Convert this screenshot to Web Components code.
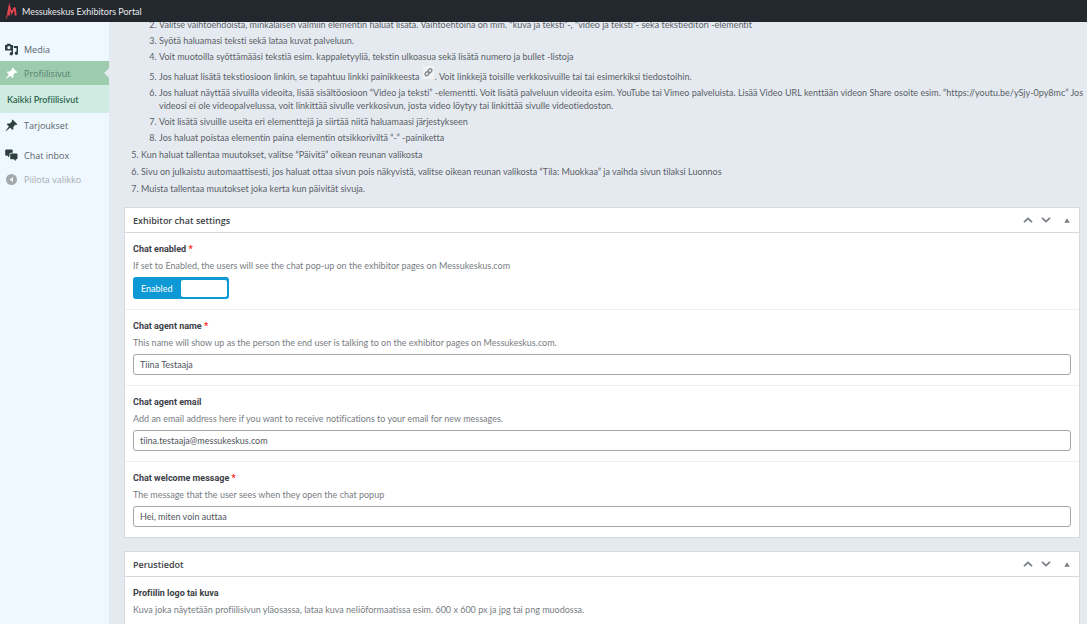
<!DOCTYPE html>
<html lang="fi">
<head>
<meta charset="utf-8">
<title>Messukeskus Exhibitors Portal</title>
<meta name="viewport" content="width=device-width, initial-scale=1">
<style>
  body { margin: 0; background: #e5eaf1; color: #5a5f65; font: 9px/13px Lato, "Noto Sans", sans-serif; font-variant-ligatures: none; }
</style>
</head>
<body>
<portal-app></portal-app>

<script>
const define = (name, html, setup) => {
  const template = document.createElement('template');
  template.innerHTML = html;
  customElements.define(name, class extends HTMLElement {
    constructor() {
      super();
      this.attachShadow({ mode: 'open' }).append(template.content.cloneNode(true));
    }
    connectedCallback() { if (setup) setup(this, this.shadowRoot); }
  });
};

define('portal-bar', `
  <style>
    :host { display: flex; align-items: center; height: 22px; padding: 0 6px; background: #23282f; position: relative; z-index: 2; }
    a { display: flex; align-items: center; gap: 5px; color: #e8eaec; text-decoration: none; font-size: 9px; }
    svg { display: block; }
  </style>
  <a href="#"><svg width="11" height="16" viewBox="0 0 11 16" fill="none" stroke="#ef4550" aria-hidden="true"><path d="M.5 15.500 3.600.5" stroke-width=".9"/><path d="M3.200 3 5.700 10 8.600 4.500" stroke-width="1.600"/><path d="M3 5.500V12.500M8.600 4.500 9.800 12.500" stroke-width="1.800"/></svg><span><slot></slot></span></a>`);

const ICONS = {
  media: '<path fill-rule="evenodd" d="M0 2h1.500L2.200.7h3L6 2h2v5.500H0ZM3.900 3a1.600 1.600 0 1 0 0 3.200 1.600 1.600 0 0 0 0-3.200Z"/><path d="M8.800 3H13v7.200a1.700 1.700 0 1 1-1.500-1.700V5H8.800Z"/><path d="M8 7v3.800a1.700 1.700 0 1 1-1.500-1.700V7Z"/>',
  pin: '<path d="M7.600.5 12.300 5.200l-.8.8-1.200-.2-2.100 2.300.2 2-.9.9-2.200-2.200L.6 12.300l-.2-.2L3.900 7.500 1.700 5.300l.9-.9 2.100.2L7 2.500l-.2-1.200Z"/>',
  chat: '<path d="M1.200.5h5.500q1 0 1 1v2.200H6q-1.500 0-1.500 1.500v1.600L3 8.500V6.700H1.200q-1 0-1-1V1.500q0-1 1-1Z"/><path d="M6.200 4.500h5.300q1 0 1 1v3.700q0 1-1 1h-.7V12l-2-1.800H6.200q-1 0-1-1V5.500q0-1 1-1Z"/>',
  hide: '<path fill-rule="evenodd" d="M6.500 1a5.500 5.500 0 1 0 0 11 5.500 5.500 0 0 0 0-11ZM8 4v5L4.500 6.500Z"/>'
};
define('menu-item', `
  <style>
    :host { display: block; }
    a, button { box-sizing: border-box; display: flex; align-items: center; gap: 6px; width: 100%; height: 24px; padding: 0 5px; border: 0; background: none; color: #58636a; font: 9px/13px "Open Sans", "Noto Sans", sans-serif; text-decoration: none; text-align: left; position: relative; }
    svg { display: block; width: 13px; height: 13px; flex: none; fill: #2f4041; }
    :host([current]) a { background: #9ccbae; color: #567f69; }
    :host([current]) svg { fill: #fff; }
    :host([current]) a::after { content: ""; position: absolute; right: 0; top: 7px; border: 5px solid transparent; border-left: 0; border-right-color: #e5eaf1; }
    button { color: #a4abb0; }
    button svg { fill: #a3a8aa; }
  </style>`, (host, root) => {
    const control = document.createElement(host.hasAttribute('action') ? 'button' : 'a');
    if (control.localName === 'a') control.href = '#';
    control.innerHTML = `<svg viewBox="0 0 13 13" aria-hidden="true">${ICONS[host.getAttribute('icon')]}</svg><span><slot></slot></span>`;
    root.append(control);
  });

define('side-menu', `
  <style>
    :host { display: block; background: #f0f8ff; }
    nav { padding-top: 15px; }
    .sub { display: flex; align-items: center; height: 28px; padding: 0 7px; background: #d0ece2; color: #2f6650; font-size: 9px; font-weight: 600; text-decoration: none; }
    .group { padding-top: 6px; }
  </style>
  <nav aria-label="Valikko">
    <menu-item icon="media">Media</menu-item>
    <menu-item icon="pin" current>Profiilisivut</menu-item>
    <a class="sub" href="#">Kaikki Profiilisivut</a>
    <menu-item icon="pin">Tarjoukset</menu-item>
    <div class="group">
      <menu-item icon="chat">Chat inbox</menu-item>
      <menu-item icon="hide" action>Piilota valikko</menu-item>
    </div>
  </nav>`);

define('help-steps', `
  <style>
    :host { display: block; }
    ol { margin: 0; padding-left: 9px; }
    ol ol { padding-left: 18px; }
    li { margin-bottom: 4px; }
    li li { margin-bottom: 3px; }
    .nest { list-style: none; }
    .icon { display: inline-block; background: #f1f2f3; margin: 0 1px 4px; padding: 1px 0; vertical-align: bottom; }
    .icon svg { display: block; }
  </style>
  <ol start="4">
    <li class="nest"><ol start="2">
      <li>Valitse vaihtoehdoista, minkälaisen valmiin elementin haluat lisätä. Vaihtoehtoina on mm. “kuva ja teksti”-, “video ja teksti”- sekä tekstieditori -elementit</li>
      <li>Syötä haluamasi teksti sekä lataa kuvat palveluun.</li>
      <li>Voit muotoilla syöttämääsi tekstiä esim. kappaletyyliä, tekstin ulkoasua sekä lisätä numero ja bullet -listoja</li>
      <li>Jos haluat lisätä tekstiosioon linkin, se tapahtuu linkki painikkeesta <span class="icon"><svg width="11" height="11" viewBox="0 0 12 12" fill="none" stroke="#85898d" stroke-width="1.500" aria-hidden="true"><rect x="5" y="2.500" width="5" height="3.400" rx="1.700" transform="rotate(-45 7.500 4.200)"/><rect x="2" y="5.500" width="5" height="3.400" rx="1.700" transform="rotate(-45 4.500 7.200)"/></svg></span>. Voit linkkejä toisille verkkosivuille tai tai esimerkiksi tiedostoihin.</li>
      <li>Jos haluat näyttää sivuilla videoita, lisää sisältöosioon “Video ja teksti” -elementti. Voit lisätä palveluun videoita esim. YouTube tai Vimeo palveluista. Lisää Video URL kenttään videon Share osoite esim. “https://youtu.be/ySjy-0py8mc” Jos videosi ei ole videopalvelussa, voit linkittää sivulle verkkosivun, josta video löytyy tai linkittää sivulle videotiedoston.</li>
      <li>Voit lisätä sivuille useita eri elementtejä ja siirtää niitä haluamaasi järjestykseen</li>
      <li>Jos haluat poistaa elementin paina elementin otsikkoriviltä “-” -painiketta</li>
    </ol></li>
    <li>Kun haluat tallentaa muutokset, valitse “Päivitä” oikean reunan valikosta</li>
    <li>Sivu on julkaistu automaattisesti, jos haluat ottaa sivun pois näkyvistä, valitse oikean reunan valikosta “Tila: Muokkaa” ja vaihda sivun tilaksi Luonnos</li>
    <li>Muista tallentaa muutokset joka kerta kun päivität sivuja.</li>
  </ol>`);

define('meta-box', `
  <style>
    :host { display: block; background: #fff; border: 1px solid #d5dade; }
    header { display: flex; align-items: center; height: 24px; padding: 0 4px 0 8px; border-bottom: 1px solid #d5dade; }
    h2 { flex: 1; margin: 0; font: 600 9px/13px "Open Sans", "Noto Sans", sans-serif; color: #3c4147; }
    button { display: flex; align-items: center; justify-content: center; width: 18px; height: 18px; padding: 0; border: 0; background: none; color: #777d83; }
    .toggle { margin-left: 4px; width: 16px; }
  </style>
  <header>
    <h2><slot name="title"></slot></h2>
    <button aria-label="Siirrä ylös"><svg width="10" height="6" viewBox="0 0 10 6" fill="none" stroke="currentColor" stroke-width="1.700"><path d="M1 5.200 5 1.400 9 5.200"/></svg></button>
    <button aria-label="Siirrä alas"><svg width="10" height="6" viewBox="0 0 10 6" fill="none" stroke="currentColor" stroke-width="1.700"><path d="M1 .8 5 4.600 9 .8"/></svg></button>
    <button class="toggle" aria-label="Näytä tai piilota"><svg width="6" height="5" viewBox="0 0 6 5" fill="currentColor"><path d="M3 .2 5.700 4.700H.3Z"/></svg></button>
  </header>
  <slot></slot>`);

define('form-field', `
  <style>
    :host { display: block; padding: 10px 8px; border-bottom: 1px solid #eef0f2; }
    :host(:last-of-type) { border-bottom: 0; }
    .name { display: block; margin-bottom: 3px; font-family: Roboto, "Noto Sans", sans-serif; font-weight: 700; color: #3c4147; }
    .name b { color: #f22; }
    p { margin: 0 0 5px; color: #787d82; }
    input[type=text], input[type=email] { display: block; box-sizing: border-box; width: 100%; height: 21px; padding: 0 6px; border: 1px solid #a0a6ab; border-radius: 3px; background: #fff; color: #50555b; font: inherit; font-variant-ligatures: none; }
    .switch { display: inline-flex; align-items: center; justify-content: space-between; box-sizing: border-box; width: 96px; height: 22px; padding: 0 2px 0 8px; border-radius: 3px; background: #0d99d5; color: #fff; vertical-align: top; }
    .switch input { appearance: none; width: 46px; height: 17px; margin: 0; border-radius: 2px; background: #fff; }
  </style>`, (host, root) => {
    const type = host.getAttribute('type');
    const label = document.createElement(type ? 'label' : 'div');
    label.className = 'name';
    label.textContent = host.getAttribute('label');
    if (type) label.htmlFor = 'control';
    if (host.hasAttribute('required')) {
      const star = document.createElement('b');
      star.textContent = '*';
      label.append(' ', star);
    }
    const hint = document.createElement('p');
    hint.textContent = host.getAttribute('hint');
    root.append(label, hint);
    if (!type) return;
    const input = document.createElement('input');
    input.type = type;
    input.id = 'control';
    if (type === 'checkbox') {
      input.checked = true;
      const toggle = document.createElement('label');
      toggle.className = 'switch';
      toggle.append(Object.assign(document.createElement('span'), { textContent: 'Enabled' }), input);
      root.append(toggle);
    } else {
      input.value = host.getAttribute('value');
      root.append(input);
    }
  });

define('portal-app', `
  <style>
    :host { display: flex; flex-direction: column; height: 100vh; overflow: hidden; }
    .body { flex: 1; min-height: 0; display: grid; grid-template-columns: 109px minmax(0, 1fr); }
    main { padding: 0 7px 0 15px; }
    help-steps { margin: -4px -7px 12px 8px; }
    meta-box { margin-bottom: 13px; }
  </style>
  <portal-bar>Messukeskus Exhibitors Portal</portal-bar>
  <div class="body">
    <side-menu></side-menu>
    <main>
      <help-steps></help-steps>
      <meta-box>
        <span slot="title">Exhibitor chat settings</span>
        <form-field type="checkbox" label="Chat enabled" required hint="If set to Enabled, the users will see the chat pop-up on the exhibitor pages on Messukeskus.com"></form-field>
        <form-field type="text" label="Chat agent name" required hint="This name will show up as the person the end user is talking to on the exhibitor pages on Messukeskus.com." value="Tiina Testaaja"></form-field>
        <form-field type="email" label="Chat agent email" hint="Add an email address here if you want to receive notifications to your email for new messages." value="tiina.testaaja@messukeskus.com"></form-field>
        <form-field type="text" label="Chat welcome message" required hint="The message that the user sees when they open the chat popup" value="Hei, miten voin auttaa"></form-field>
      </meta-box>
      <meta-box>
        <span slot="title">Perustiedot</span>
        <form-field label="Profiilin logo tai kuva" hint="Kuva joka näytetään profiilisivun yläosassa, lataa kuva neliöformaatissa esim. 600 x 600 px ja jpg tai png muodossa."></form-field>
      </meta-box>
    </main>
  </div>`);
</script>
</body>
</html>
